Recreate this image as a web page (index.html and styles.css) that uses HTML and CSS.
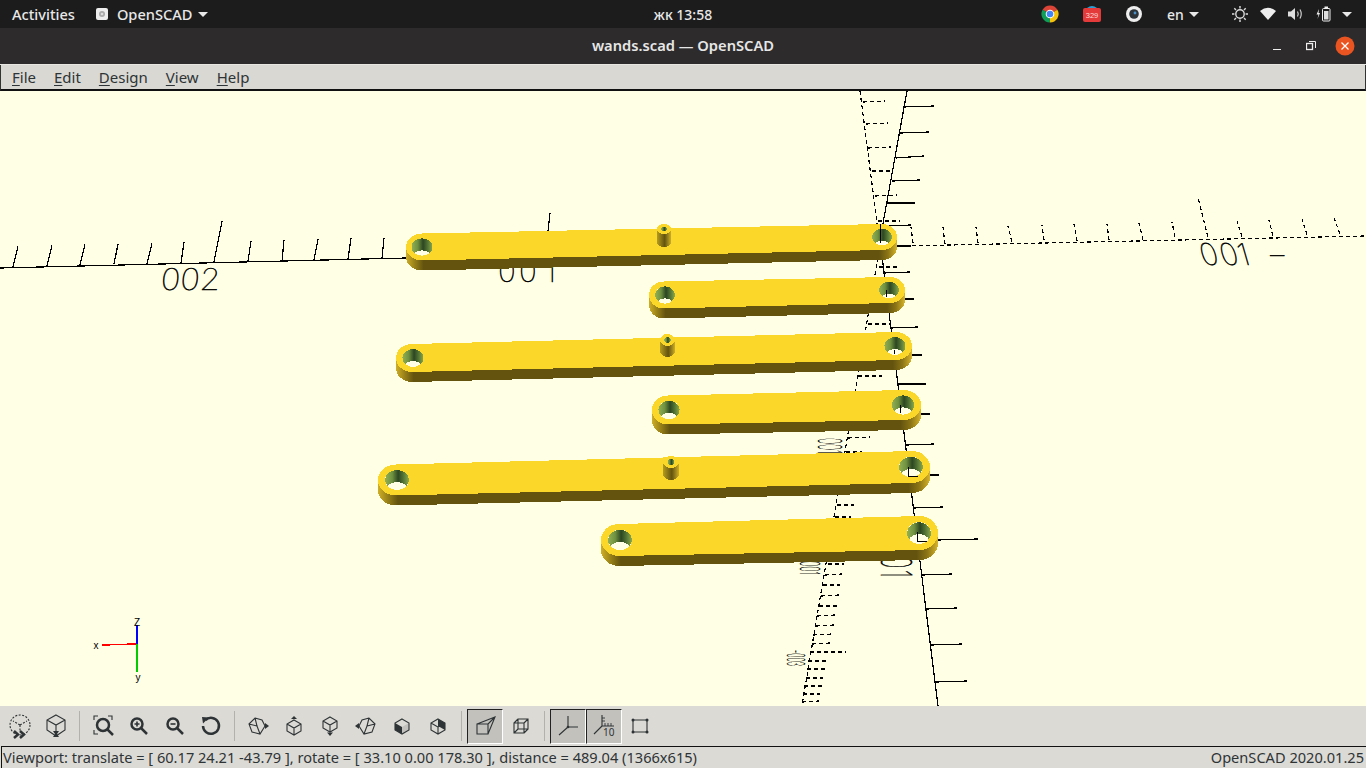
FILE: index.html
```html
<!DOCTYPE html>
<html lang="en">
<head>
  <meta charset="UTF-8" />
  <title>wands.scad — OpenSCAD</title>
  <link rel="stylesheet" href="styles.css">
</head>
<body>

  <!-- desktop top bar -->
  <div class="topbar">
    <div class="top-left">
      <span class="activities">Activities</span>
      <span class="app-menu">
        <svg class="app-icon" width="12" height="12" viewBox="0 0 12 12"><rect width="12" height="12" rx="2" fill="#eee"/><circle cx="6" cy="6" r="3" fill="#aaa"/><circle cx="6" cy="6" r="1.3" fill="#ddd"/></svg>
        OpenSCAD
        <i class="caret"></i>
      </span>
    </div>
    <div class="clock">жк 13:58</div>
    <div class="tray">
      <span class="tray-app">
        <svg width="18" height="18" viewBox="0 0 18 18">
          <path d="M9 9L1.6 4.75A8.5 8.5 0 0 1 16.4 4.75Z" fill="#db4437"/>
          <path d="M9 9L16.4 4.75A8.5 8.5 0 0 1 9 17.5Z" fill="#f4c20d"/>
          <path d="M9 9L9 17.5A8.5 8.5 0 0 1 1.6 4.75Z" fill="#0f9d58"/>
          <circle cx="9" cy="9" r="4.3" fill="#fff"/>
          <circle cx="9" cy="9" r="3.3" fill="#4285f4"/>
        </svg>
      </span>
      <span class="tray-app">
        <svg width="18" height="18" viewBox="0 0 18 18">
          <path d="M4 3Q9 -1 14 3Z" fill="#2a9fd6"/>
          <rect y="3" width="18" height="14" rx="2" fill="#e53a3a"/>
          <text class="badge-num" x="9" y="12.5">329</text>
        </svg>
      </span>
      <span class="tray-app">
        <svg width="18" height="18" viewBox="0 0 18 18">
          <circle cx="9" cy="9" r="8" fill="#eee"/>
          <circle cx="9" cy="9" r="4.8" fill="#2b3238"/>
          <circle cx="10" cy="8" r="1.4" fill="#4a90c8"/>
        </svg>
      </span>
      <span class="lang">en <i class="caret"></i></span>
      <span class="tray-cell">
        <svg width="18" height="18" viewBox="0 0 18 18" fill="none" stroke="#ddd" stroke-width="1.4">
          <circle cx="9" cy="9" r="4.2"/>
          <path d="M9 1v2.4M9 14.6V17M1 9h2.4M14.6 9H17M3.3 3.3l1.7 1.7M13 13l1.7 1.7M3.3 14.7L5 13M13 5l1.7-1.7"/>
        </svg>
      </span>
      <span class="tray-cell">
        <svg width="16" height="14" viewBox="0 0 16 14"><path d="M0 4Q8 -2.5 16 4L8 13Z" fill="#eee"/></svg>
      </span>
      <span class="tray-cell">
        <svg width="16" height="14" viewBox="0 0 16 14" fill="none"><path d="M0 4.5h3L7 1v12L3 9.500H0Z" fill="#ddd"/><path d="M9.500 4.500Q11 7 9.500 9.500M12 2.500Q14.500 7 12 11.500" stroke="#ccc" stroke-width="1.200"/></svg>
      </span>
      <span class="tray-cell">
        <svg width="16" height="16" viewBox="0 0 16 16"><path d="M3 3L0.500 8.500H2.500L1.500 13L4 7H2.500Z" fill="#eee"/><rect x="6.500" y="2.500" width="7.500" height="12.500" rx="1" fill="none" stroke="#eee"/><rect x="8.500" y="0.500" width="3.500" height="2" fill="#eee"/><rect x="8" y="5" width="4.500" height="8.500" fill="#ddd"/></svg>
      </span>
      <span class="tray-end"><i class="caret"></i></span>
    </div>
  </div>

  <!-- window title -->
  <div class="titlebar">
    <div></div>
    <div class="title">wands.scad — OpenSCAD</div>
    <div class="win-btns">
      <span class="win-btn"><i class="win-min"></i></span>
      <span class="win-btn">
        <svg width="10" height="10" viewBox="0 0 10 10" fill="none" stroke="#eee"><rect x="0.500" y="2.500" width="6" height="6" stroke-width="1.300"/><path d="M3 0.500h6.500V7"/></svg>
      </span>
      <span class="win-btn">
        <svg width="20" height="20" viewBox="0 0 20 20"><circle cx="10" cy="10" r="9.500" fill="#e95420"/><path d="M6.500 6.500l7 7M13.500 6.500l-7 7" stroke="#fff" stroke-width="1.300"/></svg>
      </span>
    </div>
  </div>

  <div class="menubar">
    <span class="menu-item"><u>F</u>ile</span>
    <span class="menu-item"><u>E</u>dit</span>
    <span class="menu-item"><u>D</u>esign</span>
    <span class="menu-item"><u>V</u>iew</span>
    <span class="menu-item"><u>H</u>elp</span>
  </div>

  <!-- 3d view, coordinates are screen coordinates -->
  <div class="viewport">
    <svg class="scene" width="1366" height="615" viewBox="0 91 1366 615">
      <defs>
        <linearGradient id="holeWall">
          <stop offset="0" stop-color="#92b056"/>
          <stop offset="0.3" stop-color="#6f913f"/>
          <stop offset="0.55" stop-color="#2c4622"/>
          <stop offset="0.75" stop-color="#4f7033"/>
          <stop offset="1" stop-color="#8aa94d"/>
        </linearGradient>
        <linearGradient id="pegSide">
          <stop offset="0" stop-color="#b59c1f"/>
          <stop offset="0.55" stop-color="#63530f"/>
          <stop offset="1" stop-color="#cdae28"/>
        </linearGradient>
      </defs>

      <!-- solid axes -->
      <path class="axis" d="M0 268L406 258M907 91L880 240L938 706M897 246L880 246"/>
      <path class="axis" d="M13 267L18 246M47 266L52 245M80 265L85 244M114 264L118 244M147 264L152 243M181 263L184 242M214 262L222 221M248 261L251 241M282 261L284 240M314 260L318 239M348 259L351 238M382 258L384 238M548 231L550 213"/>
      <path class="axis" d="M903 107L934 106M900 133L929 132M896 158L924 156M892 181L920 180M887 203L915 203M883 226L911 225M897 246L911 246M883 273L910 272M904 299L914 299M890 328L918 327M912 355L922 355M898 384L926 384M918 414L930 414M906 445L934 444M928 475L939 475M913 508L943 507M937 540L978 539M922 575L952 574M926 609L957 608M931 645L962 644M936 682L967 681"/>

      <!-- dashed axes -->
      <path class="axis dash" d="M905 246L1366 236M860 91L877 223L880 245L802 705"/>
      <path class="axis dash" d="M913 243L911 227M945 244L943 227M978 243L976 227M1012 242L1008 226M1044 240L1042 225M1077 241L1074 224M1109 240L1107 224M1143 240L1139 223M1175 237L1172 222M1208 237L1198 198M1242 237L1237 221M1273 236L1269 220M1307 235L1302 219M1340 234L1334 218"/>
      <path class="axis dash" d="M863 102L885 101M866 124L888 123M868 148L891 147M872 171L893 171M875 196L897 195M878 221L900 221M879 267L900 267M868 324L890 324M858 376L882 376M848 438L870 437M846 452L862 452M837 505L854 505M835 517L851 517M828 564L844 564M825 575L842 574M823 585L840 585M821 596L839 595M819 606L837 606M817 616L835 615M816 626L834 625M813 635L832 634M812 644L830 643M810 652L846 652M808 661L827 661M807 669L825 669M806 678L823 678M804 686L822 686M803 694L820 694M802 702L819 701"/>

      <!-- scale numbers -->
      <text class="axis-num" transform="translate(160 290) skewX(-5) scale(1.1 1)">002</text>
      <text class="axis-num" transform="translate(498 282)" x="0 21 47">001</text>
      <text class="axis-num" transform="translate(1203 265) skewX(16)" x="0 20 38">001</text>
      <text class="axis-num" transform="translate(1266 265) scale(1.700 1)">-</text>
      <text class="axis-num" transform="translate(818 438) rotate(90) scale(0.34 1.100)">001</text>
      <text class="axis-num" transform="translate(800 561) rotate(90) scale(0.3 0.9)">001</text>
      <text class="axis-num" transform="translate(787 650) rotate(90) scale(0.24 0.82)">-003</text>
      <text class="axis-num" transform="translate(881 556) rotate(90) scale(0.7 1.400)" x="0 20">01</text>

      <g id="wands"></g>

      <!-- axis lines seen through the holes -->
      <path class="axis" d="M880.500 224V243M886.500 290V297M894.500 350V354M900.500 405V413M908.500 467V476.500H918M917.500 532V541.500H927"/>

      <!-- orientation gizmo -->
      <path class="giz red" d="M102 645L136 644"/>
      <path class="giz blue" d="M137 625L137 644"/>
      <path class="giz green" d="M137 644L137 672"/>
      <text class="giz-label" x="137" y="626">Z</text>
      <text class="giz-label" x="96" y="649">x</text>
      <text class="giz-label" x="138" y="681">y</text>
    </svg>
  </div>

  <div class="toolbar">
    <span class="tool">
      <svg viewBox="0 0 24 24" class="ic"><circle cx="12" cy="11" r="10" stroke-dasharray="2 1.500"/><path d="M12 11L5 7M12 11L19 7M12 11V18" stroke-dasharray="2 1.500"/><path class="bold" d="M6 17l4 3.500-4 3.500M12 17l4 3.500-4 3.500"/></svg>
    </span>
    <span class="tool">
      <svg viewBox="0 0 24 24" class="ic"><path d="M12 1L21 6V16L12 22L3 16V6ZM3 6L12 11L21 6M12 11V17"/><path class="solid" d="M9 17H15L13 20L15 23H9L11 20Z"/></svg>
    </span>
    <i class="sep"></i>
    <span class="tool">
      <svg viewBox="0 0 24 24" class="ic"><circle class="bold" cx="12" cy="11" r="6"/><path class="bold" d="M16 15L22 21"/><path d="M3 6V2H7M17 2H21V6M3 16V20H7"/></svg>
    </span>
    <span class="tool">
      <svg viewBox="0 0 24 24" class="ic"><circle class="bold" cx="10" cy="10" r="5.500"/><path class="bold" d="M14 14L20 20"/><path d="M7.500 10H12.500M10 7.500V12.500" stroke-width="1.600"/></svg>
    </span>
    <span class="tool">
      <svg viewBox="0 0 24 24" class="ic"><circle class="bold" cx="10" cy="10" r="5.500"/><path class="bold" d="M14 14L20 20"/><path d="M7.500 10H12.500" stroke-width="1.600"/></svg>
    </span>
    <span class="tool">
      <svg viewBox="0 0 24 24" class="ic"><path class="bold" d="M6.500 6A8 8 0 1 1 4 12"/><path class="solid" d="M3 3L10 3.500L4 9.500Z"/></svg>
    </span>
    <i class="sep"></i>
    <span class="tool">
      <svg viewBox="0 0 24 24" class="ic"><path d="M9 4L16 6L19 12L14 20L6 18L3 10ZM3 10L11 12L9 4M11 12L14 20"/><path class="solid" d="M19 9L23 12L19 15Z"/></svg>
    </span>
    <span class="tool">
      <svg viewBox="0 0 24 24" class="ic"><path d="M12 6L19 10V17L12 21L5 17V10ZM5 10L12 14L19 10M12 14V21"/><path class="solid" d="M9 5L12 2L15 5Z"/></svg>
    </span>
    <span class="tool">
      <svg viewBox="0 0 24 24" class="ic"><path d="M12 3L19 7V14L12 18L5 14V7ZM5 7L12 11L19 7M12 3V3M12 11V18"/><path class="solid" d="M9 18.500L12 22L15 18.500Z"/></svg>
    </span>
    <span class="tool">
      <svg viewBox="0 0 24 24" class="ic"><path d="M15 4L8 6L5 12L10 20L18 18L21 10ZM21 10L13 12L15 4M13 12L10 20"/><path class="solid" d="M5 9L1 12L5 15Z"/></svg>
    </span>
    <span class="tool">
      <svg viewBox="0 0 24 24" class="ic"><path d="M12 5L19 9V16L12 20L5 16V9Z"/><path class="solid" d="M5 9L12 13V20L5 16Z"/><path class="solid" d="M12 13L19 9V16L12 20Z" opacity="0.15"/></svg>
    </span>
    <span class="tool">
      <svg viewBox="0 0 24 24" class="ic"><path d="M12 5L19 9V16L12 20L5 16V9ZM5 9L12 13V20M12 13L19 9"/><path class="solid" d="M12 5L19 9V16L12 12Z"/></svg>
    </span>
    <i class="sep"></i>
    <span class="tool on">
      <svg viewBox="0 0 24 24" class="ic"><path d="M4 10H15V20H4ZM4 10L22 3L15 20M15 10L22 3"/></svg>
    </span>
    <span class="tool">
      <svg viewBox="0 0 24 24" class="ic"><path d="M5 9H15V19H5ZM9 5H19V15H9ZM5 9L9 5M15 9L19 5M15 19L19 15M5 19L9 15"/></svg>
    </span>
    <i class="sep"></i>
    <span class="tool on">
      <svg viewBox="0 0 24 24" class="ic"><path d="M12 2V13H22M12 13L3 21"/><circle class="solid" cx="12" cy="13" r="1.300"/></svg>
    </span>
    <span class="tool on">
      <svg viewBox="0 0 24 24" class="ic"><path d="M10 1V12H22M10 12L2 20"/><path d="M13 9V12M16 9V12M19 9V12M10 4H13M10 7H13" stroke-width="0.900"/><text class="ten" x="11" y="22">10</text></svg>
    </span>
    <span class="tool">
      <svg viewBox="0 0 24 24" class="ic"><path d="M5 6H19V18H5Z"/><path class="dots" d="M5 6h.01M19 6h.01M5 18h.01M19 18h.01"/></svg>
    </span>
  </div>

  <div class="statusbar">
    <span class="status-main">Viewport: translate = [ 60.17 24.21 -43.79 ], rotate = [ 33.10 0.00 178.30 ], distance = 489.04 (1366x615)</span>
    <span class="status-ver">OpenSCAD 2020.01.25</span>
  </div>

  <script src="scene.js"></script>

</body>
</html>
```

FILE: styles.css
```css
body {
  margin: 0;
  width: 1366px;
  height: 768px;
  overflow: hidden;
  display: flex;
  flex-direction: column;
  font-family: "Noto Sans", sans-serif;
  background: #dcdad5;
}
.topbar {
  height: 28px;
  flex: none;
  display: grid;
  grid-template-columns: 1fr auto 1fr;
  align-items: center;
  background: #1c1c1c;
  color: #e8e8e8;
  font-size: 14.6px;
  font-weight: 500;
}
.top-left {
  display: flex;
  align-items: center;
  padding-left: 12px;
}
.activities {
  margin-right: 21px;
}
.app-menu {
  display: flex;
  align-items: center;
}
.app-icon {
  margin-right: 9px;
}
.caret {
  display: inline-block;
  width: 0;
  height: 0;
  margin-left: 6px;
  border-left: 5px solid transparent;
  border-right: 5px solid transparent;
  border-top: 5px solid #e8e8e8;
}
.clock {
  font-size: 14px;
}
.tray {
  display: flex;
  justify-content: flex-end;
  align-items: center;
  padding-right: 10px;
}
.tray-app {
  width: 42px;
  display: flex;
  justify-content: center;
}
.badge-num {
  font-family: "Liberation Sans", sans-serif;
  font-size: 7.5px;
  fill: #ffd9d9;
  text-anchor: middle;
}
.lang {
  margin: 0 27px 0 12px;
  display: flex;
  align-items: center;
  width: 32px;
  white-space: pre;
  font-size: 14px;
}
.lang .caret {
  margin-left: 2px;
}
.tray-cell {
  width: 28px;
  display: flex;
  justify-content: center;
}
.tray-end {
  width: 18px;
  display: flex;
  justify-content: center;
}
.tray-end .caret {
  margin: 0;
}

.titlebar {
  height: 36px;
  flex: none;
  display: grid;
  grid-template-columns: 1fr auto 1fr;
  align-items: center;
  background: #2d2b2c;
  border-bottom: 1px solid #e8e6e1;
  color: #e6e6e6;
  box-sizing: content-box;
}
.title {
  font-size: 14.7px;
  font-weight: 600;
  padding-bottom: 2px;
}
.win-btns {
  display: flex;
  justify-content: flex-end;
  padding-right: 4px;
}
.win-btn {
  width: 34px;
  height: 22px;
  display: flex;
  justify-content: center;
  align-items: center;
}
.win-min {
  width: 8px;
  height: 1px;
  margin-top: 7px;
  background: #eee;
}

.menubar {
  height: 24px;
  flex: none;
  display: flex;
  align-items: center;
  padding-left: 11px;
  gap: 18px;
  background: #d9d8d3;
  border-left: 1px solid #333;
  border-right: 1px solid #333;
  border-bottom: 2px solid #111;
  font-size: 15px;
  color: #2e3436;
}
.menu-item u {
  text-underline-offset: 2px;
}

.viewport {
  height: 615px;
  flex: none;
  background: #ffffe5;
}
.scene {
  display: block;
}
.axis {
  fill: none;
  stroke: #000;
  stroke-width: 1.2;
  shape-rendering: crispEdges;
}
.axis.dash {
  stroke-dasharray: 4 3;
}
.axis-num {
  font-family: Inter, "Noto Sans", sans-serif;
  font-size: 30px;
  font-weight: 100;
  fill: #000;
  stroke: #000;
  stroke-width: 0.5;
}
.wand-top {
  fill: #fbd72a;
  shape-rendering: crispEdges;
}
.wand-side {
  shape-rendering: crispEdges;
}
.hole-open {
  fill: #ffffe5;
  shape-rendering: crispEdges;
}
.hole-wall {
  fill: url(#holeWall);
  shape-rendering: crispEdges;
}
.peg-side {
  fill: url(#pegSide);
  shape-rendering: crispEdges;
}
.giz {
  fill: none;
  stroke-width: 1.5;
  shape-rendering: crispEdges;
}
.red { stroke: #f00; }
.blue { stroke: #00f; }
.green { stroke: #0c0; }
.giz-label {
  font-family: "Liberation Sans", sans-serif;
  font-size: 10px;
  fill: #000;
  text-anchor: middle;
}

.toolbar {
  height: 40px;
  flex: none;
  box-sizing: border-box;
  display: flex;
  align-items: center;
  padding-left: 2px;
  background: #dcdad5;
}
.tool {
  width: 36px;
  height: 35px;
  box-sizing: border-box;
  display: flex;
  justify-content: center;
  align-items: center;
}
.tool.on {
  background: #c2c1bc;
  border-top: 1px solid #222;
  border-left: 1px solid #222;
  border-right: 1px solid #fff;
  border-bottom: 1px solid #fff;
}
.sep {
  flex: none;
  width: 0;
  height: 30px;
  margin: 0 5px;
  box-sizing: content-box;
  border-right: 1px solid #b3b1ac;
}
.ic {
  width: 24px;
  height: 24px;
  overflow: visible;
  fill: none;
  stroke: #2e3436;
  stroke-width: 1.100;
}
.ic .bold {
  stroke-width: 2.500;
}
.ic .solid {
  fill: #2e3436;
  stroke: none;
}
.ic .dots {
  stroke-width: 3;
  stroke-linecap: round;
}
.ten {
  font-family: "Noto Sans", sans-serif;
  font-size: 10px;
  fill: #2e3436;
  stroke: none;
}

.statusbar {
  flex: 1;
  display: flex;
  justify-content: space-between;
  align-items: center;
  box-sizing: border-box;
  padding: 0 2px 2px 1px;
  border-top: 1px solid #111;
  border-left: 1px solid #111;
  margin-left: 1px;
  font-size: 14.6px;
  color: #2e3436;
  white-space: nowrap;
}
```

FILE: scene.js
```js
// end caps: [cx, cy, rx, ry]
var wands = [
  { l: [422, 247, 16, 13.5], r: [882, 237, 15, 13] },
  { l: [664, 295, 15, 13.5], r: [890, 290, 15, 13] },
  { l: [412, 358, 16, 14], r: [896, 346, 16, 14] },
  { l: [668, 410, 16, 14.5], r: [904, 405, 17, 15] },
  { l: [396, 480, 18, 15.5], r: [912, 467, 18, 16] },
  { l: [619, 540, 18, 16], r: [920, 533, 18, 17] }
];
// pegs: [cx, cy, rx, ry, height]
var pegs = [
  [664, 229, 7, 5, 13],
  [667.5, 340, 7.5, 6, 11],
  [671, 462, 8, 6, 12]
];
var THICK = 10;

function el(parent, name, attrs) {
  var node = document.createElementNS('http://www.w3.org/2000/svg', name);
  for (var key in attrs) node.setAttribute(key, attrs[key]);
  parent.appendChild(node);
  return node;
}

function sideGradient(defs, id, w) {
  var width = w.r[0] + w.r[2] - w.l[0] + w.l[2];
  var grad = el(defs, 'linearGradient', { id: id });
  var stops = [
    [0, '#d0af27'],
    [w.l[2] * 0.5 / width, '#9c8419'],
    [w.l[2] * 1.1 / width, '#63530f'],
    [1 - w.r[2] * 1.2 / width, '#63530f'],
    [1 - w.r[2] * 0.6 / width, '#8c7516'],
    [1, '#d8b52a']
  ];
  stops.forEach(function (s) {
    el(grad, 'stop', { offset: s[0], 'stop-color': s[1] });
  });
}

function drawHole(g, cap, shift) {
  var rx = cap[2] * 0.66, ry = cap[3] * 0.64;
  var cx = cap[0] + shift, cy = cap[1];
  var ym = cy + THICK * 0.6;
  var dx = rx * Math.sqrt(1 - Math.pow(THICK * 0.6 / ry, 2));
  el(g, 'ellipse', { 'class': 'hole-open', cx: cx, cy: cy, rx: rx, ry: ry });
  el(g, 'path', {
    'class': 'hole-wall',
    d: 'M' + (cx - dx) + ' ' + ym +
       'A' + rx + ' ' + ry + ' 0 1 1 ' + (cx + dx) + ' ' + ym +
       'A' + rx + ' ' + ry + ' 0 0 0 ' + (cx - dx) + ' ' + ym + 'Z'
  });
}

function drawWand(g, defs, w, i) {
  var l = w.l, r = w.r;
  var id = 'side' + i;
  sideGradient(defs, id, w);
  el(g, 'path', {
    'class': 'wand-side',
    fill: 'url(#' + id + ')',
    d: 'M' + (l[0] - l[2]) + ' ' + l[1] + 'V' + (l[1] + THICK) +
       'A' + l[2] + ' ' + l[3] + ' 0 0 0 ' + l[0] + ' ' + (l[1] + THICK + l[3]) +
       'L' + r[0] + ' ' + (r[1] + THICK + r[3]) +
       'A' + r[2] + ' ' + r[3] + ' 0 0 0 ' + (r[0] + r[2]) + ' ' + (r[1] + THICK) +
       'V' + r[1] + 'Z'
  });
  el(g, 'path', {
    'class': 'wand-top',
    d: 'M' + l[0] + ' ' + (l[1] - l[3]) + 'L' + r[0] + ' ' + (r[1] - r[3]) +
       'A' + r[2] + ' ' + r[3] + ' 0 0 1 ' + r[0] + ' ' + (r[1] + r[3]) +
       'L' + l[0] + ' ' + (l[1] + l[3]) +
       'A' + l[2] + ' ' + l[3] + ' 0 0 1 ' + l[0] + ' ' + (l[1] - l[3]) + 'Z'
  });
  drawHole(g, l, i ? 1 : 0);
  drawHole(g, r, i ? -1 : 0);
}

function drawPeg(g, p) {
  var x = p[0], y = p[1], rx = p[2], ry = p[3], h = p[4];
  el(g, 'path', {
    'class': 'peg-side',
    d: 'M' + (x - rx) + ' ' + y + 'V' + (y + h) +
       'A' + rx + ' ' + ry + ' 0 0 0 ' + (x + rx) + ' ' + (y + h) + 'V' + y + 'Z'
  });
  el(g, 'ellipse', { 'class': 'wand-top', cx: x, cy: y, rx: rx, ry: ry });
  el(g, 'ellipse', { 'class': 'hole-wall', cx: x, cy: y, rx: rx * 0.42, ry: ry * 0.5 });
}

var group = document.getElementById('wands');
var defs = document.querySelector('.scene defs');
wands.forEach(function (w, i) { drawWand(group, defs, w, i); });
pegs.forEach(function (p) { drawPeg(group, p); });
```
